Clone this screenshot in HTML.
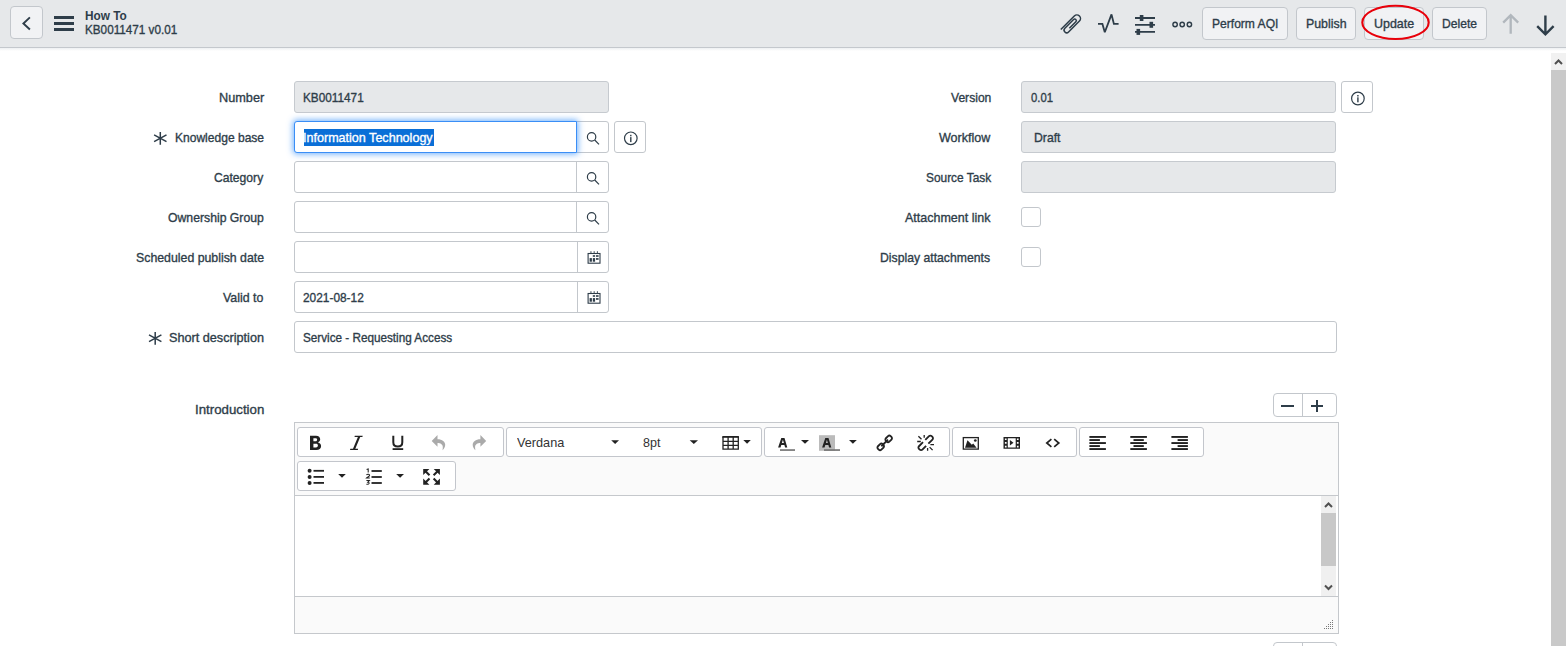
<!DOCTYPE html>
<html><head><meta charset="utf-8">
<style>
*{box-sizing:border-box;margin:0;padding:0}
html,body{width:1566px;height:646px;overflow:hidden;background:#fff;font-family:"Liberation Sans",sans-serif;color:#2e3d49}
.a{position:absolute}
.t{position:absolute;white-space:nowrap;line-height:20px;-webkit-text-stroke:0.35px currentColor}
#hdr{left:0;top:0;width:1566px;height:48px;background:#e6e8ea;border-bottom:1px solid #c4c8cd}
#shadow{left:0;top:48px;width:1566px;height:3px;background:linear-gradient(#eef0f2,#fff)}
.btn{position:absolute;background:#f1f2f4;border:1px solid #c3c7cc;border-radius:4px}
.lbl{position:absolute;white-space:nowrap;line-height:14px;text-align:right;color:#2e3d49}
.inp{position:absolute;border:1px solid #c3c7cc;border-radius:3px;background:#fff}
.ro{background:#e6e8ea;border-color:#c6cacf}
.ib{position:absolute;border:1px solid #c3c7cc;border-radius:3px;background:#fff}
.req{position:absolute}
.tg{border:1px solid #c3c6cc;border-radius:3px;background:#fff}
</style></head>
<body>
<div id="hdr" class="a"></div>
<div id="shadow" class="a"></div>

<!-- back button -->
<div class="btn" style="left:10px;top:6px;width:33px;height:33px"></div>
<svg class="a" style="left:10px;top:6px" width="33" height="33" viewBox="0 0 33 33"><path d="M29.5 0" /><path d="M19.9 11.4 L13.4 17.45 L19.9 23.5" fill="none" stroke="#2e3d49" stroke-width="1.9"/></svg>
<!-- hamburger -->
<div class="a" style="left:54px;top:16px;width:20px;height:3px;background:#2e3d49"></div>
<div class="a" style="left:54px;top:22px;width:20px;height:3px;background:#2e3d49"></div>
<div class="a" style="left:54px;top:28px;width:20px;height:3px;background:#2e3d49"></div>
<div class="t" style="left:84.82px;top:6.00px;font-size:13.5px;font-weight:700;transform:scaleX(0.8761);transform-origin:0 0;color:#2e3d49;-webkit-text-stroke:0">How To</div>
<div class="t" style="left:84.80px;top:20.00px;font-size:13px;font-weight:400;transform:scaleX(0.9010);transform-origin:0 0;color:#2e3d49;">KB0011471 v0.01</div>

<!-- header icons -->
<svg class="a" style="left:0;top:0" width="1200" height="50" viewBox="0 0 1200 50"><g transform="translate(1071.6 23.8) rotate(-45) scale(1.13)"><path d="M-10.3 -3.2 H6.6 A3.2 3.2 0 0 1 6.6 3.2 H-7 A2.3 2.3 0 0 1 -7 -1.4 H3.9 A1.4 1.4 0 0 1 3.9 1.4 H-4.2" fill="none" stroke="#2e3d49" stroke-width="1.35"/></g></svg>
<svg class="a" style="left:0;top:0" width="1200" height="50" viewBox="0 0 1200 50"><path d="M1098 23.9 H1102.4 L1104.8 32.2 L1111.5 14.4 L1113.9 23.9 H1118.6" fill="none" stroke="#2e3d49" stroke-width="1.8" stroke-linejoin="miter" stroke-miterlimit="2.2"/></svg>
<svg class="a" style="left:1133px;top:12px" width="24" height="24" viewBox="0 0 24 24"><path d="M2 6 H22 M2 12.8 H22 M2 19.9 H22" stroke="#2e3d49" stroke-width="1.8"/><rect x="6.8" y="3" width="3.6" height="6" fill="#2e3d49"/><rect x="16.5" y="9.8" width="3.6" height="6" fill="#2e3d49"/><rect x="3.5" y="16.9" width="3.6" height="6" fill="#2e3d49"/></svg>
<svg class="a" style="left:0;top:0" width="1200" height="50" viewBox="0 0 1200 50"><g fill="none" stroke="#2e3d49" stroke-width="1.4"><circle cx="1175.1" cy="24.5" r="2.2"/><circle cx="1182.2" cy="24.5" r="2.2"/><circle cx="1189.4" cy="24.5" r="2.2"/></g></svg>

<div class="btn" style="left:1202px;top:7px;width:86px;height:33px"></div>
<div class="t" style="left:1211.77px;top:14.00px;font-size:13px;font-weight:400;transform:scaleX(0.9286);transform-origin:0 0;color:#2e3d49;">Perform AQI</div>
<div class="btn" style="left:1296px;top:7px;width:60px;height:33px"></div>
<div class="t" style="left:1305.75px;top:14.00px;font-size:13px;font-weight:400;transform:scaleX(0.9512);transform-origin:0 0;color:#2e3d49;">Publish</div>
<div class="btn" style="left:1364px;top:7px;width:60px;height:33px"></div>
<div class="t" style="left:1373.74px;top:14.00px;font-size:13px;font-weight:400;transform:scaleX(0.9585);transform-origin:0 0;color:#2e3d49;">Update</div>
<div class="btn" style="left:1432px;top:7px;width:55px;height:33px"></div>
<div class="t" style="left:1442.27px;top:14.00px;font-size:13px;font-weight:400;transform:scaleX(0.9306);transform-origin:0 0;color:#2e3d49;">Delete</div>
<svg class="a" style="left:1361px;top:4px" width="70" height="37" viewBox="0 0 70 37"><ellipse cx="34.5" cy="18.4" rx="33.2" ry="16.6" fill="none" stroke="#e8000a" stroke-width="2.1"/></svg>
<svg class="a" style="left:1498px;top:11px" width="26" height="26" viewBox="0 0 26 26"><path d="M12.7 22.7 V4.5 M5.2 11.6 L12.7 4.2 L20.2 11.6" fill="none" stroke="#b1b7bd" stroke-width="2.3"/></svg>
<svg class="a" style="left:1532px;top:12px" width="26" height="26" viewBox="0 0 26 26"><path d="M13.4 3.5 V21.5 M5.2 14.2 L13.4 22.3 L21.6 14.2" fill="none" stroke="#2e3d49" stroke-width="2.4"/></svg>

<!-- page scrollbar -->
<div class="a" style="left:1551px;top:53px;width:15px;height:593px;background:#f1f1f1"></div>
<div class="a" style="left:1551px;top:70px;width:15px;height:576px;background:#c9c9c9"></div>
<svg class="a" style="left:1551px;top:53px" width="15" height="17" viewBox="0 0 15 17"><path d="M4 11 L7.5 7.5 L11 11" fill="none" stroke="#505050" stroke-width="2"/></svg>

<!-- FORM LEFT -->
<div class="t" style="left:218.72px;top:88.00px;font-size:13px;font-weight:400;transform:scaleX(0.9778);transform-origin:0 0;color:#2e3d49;">Number</div>
<div class="inp ro" style="left:294px;top:81px;width:315px;height:32px"></div>
<div class="t" style="left:302.99px;top:88.00px;font-size:13px;font-weight:400;transform:scaleX(0.9061);transform-origin:0 0;color:#2e3d49;">KB0011471</div>

<div class="t" style="left:174.77px;top:128.00px;font-size:13px;font-weight:400;transform:scaleX(0.9263);transform-origin:0 0;color:#2e3d49;">Knowledge base</div>
<div class="inp" style="left:576px;top:121px;width:33px;height:32px;border-radius:0 3px 3px 0"></div>
<div class="inp" style="left:294px;top:121px;width:283px;height:32px;border-radius:3px 0 0 3px;border-color:#3a8ef6;box-shadow:0 0 6px 1px rgba(45,140,250,.7)"></div>
<div class="a" style="left:304px;top:129px;width:130px;height:17px;background:#0a6fd7"></div>
<div class="t" style="left:303.23px;top:128.00px;font-size:13px;font-weight:400;transform:scaleX(0.9662);transform-origin:0 0;color:#fff;">Information Technology</div>
<div class="ib" style="left:614px;top:121px;width:32px;height:32px"></div>

<div class="t" style="left:214.27px;top:168.00px;font-size:13px;font-weight:400;transform:scaleX(0.9327);transform-origin:0 0;color:#2e3d49;">Category</div>
<div class="inp" style="left:294px;top:161px;width:315px;height:32px"></div>
<div class="a" style="left:576px;top:162px;width:1px;height:30px;background:#c3c7cc"></div>

<div class="t" style="left:167.76px;top:208.00px;font-size:13px;font-weight:400;transform:scaleX(0.9406);transform-origin:0 0;color:#2e3d49;">Ownership Group</div>
<div class="inp" style="left:294px;top:201px;width:315px;height:32px"></div>
<div class="a" style="left:576px;top:202px;width:1px;height:30px;background:#c3c7cc"></div>

<div class="t" style="left:135.75px;top:248.00px;font-size:13px;font-weight:400;transform:scaleX(0.9478);transform-origin:0 0;color:#2e3d49;">Scheduled publish date</div>
<div class="inp" style="left:294px;top:241px;width:315px;height:32px"></div>
<div class="a" style="left:577px;top:242px;width:1px;height:30px;background:#c3c7cc"></div>

<div class="t" style="left:223.20px;top:288.00px;font-size:13px;font-weight:400;transform:scaleX(0.9524);transform-origin:0 0;color:#2e3d49;">Valid to</div>
<div class="inp" style="left:294px;top:281px;width:315px;height:32px"></div>
<div class="a" style="left:577px;top:282px;width:1px;height:30px;background:#c3c7cc"></div>
<div class="t" style="left:302.79px;top:288.00px;font-size:13px;font-weight:400;transform:scaleX(0.9138);transform-origin:0 0;color:#2e3d49;">2021-08-12</div>

<div class="t" style="left:168.73px;top:328.00px;font-size:13px;font-weight:400;transform:scaleX(0.9740);transform-origin:0 0;color:#2e3d49;">Short description</div>
<div class="inp" style="left:294px;top:321px;width:1043px;height:32px"></div>
<div class="t" style="left:302.80px;top:328.00px;font-size:13px;font-weight:400;transform:scaleX(0.9012);transform-origin:0 0;color:#2e3d49;">Service - Requesting Access</div>

<!-- FORM RIGHT -->
<div class="t" style="left:950.70px;top:88.00px;font-size:13px;font-weight:400;transform:scaleX(0.9302);transform-origin:0 0;color:#2e3d49;">Version</div>
<div class="inp ro" style="left:1021px;top:81px;width:315px;height:32px"></div>
<div class="t" style="left:1030.70px;top:88.00px;font-size:13px;font-weight:400;transform:scaleX(0.8680);transform-origin:0 0;color:#2e3d49;">0.01</div>
<div class="ib" style="left:1341px;top:81px;width:32px;height:32px"></div>

<div class="t" style="left:939.20px;top:128.00px;font-size:13px;font-weight:400;transform:scaleX(0.9623);transform-origin:0 0;color:#2e3d49;">Workflow</div>
<div class="inp ro" style="left:1021px;top:121px;width:315px;height:32px"></div>
<div class="t" style="left:1034.36px;top:128.00px;font-size:13px;font-weight:400;transform:scaleX(0.9407);transform-origin:0 0;color:#2e3d49;">Draft</div>

<div class="t" style="left:925.79px;top:168.00px;font-size:13px;font-weight:400;transform:scaleX(0.9143);transform-origin:0 0;color:#2e3d49;">Source Task</div>
<div class="inp ro" style="left:1021px;top:161px;width:315px;height:32px"></div>

<div class="t" style="left:904.70px;top:208.00px;font-size:13px;font-weight:400;transform:scaleX(0.9607);transform-origin:0 0;color:#2e3d49;">Attachment link</div>
<div class="inp" style="left:1021px;top:207px;width:20px;height:20px;border-radius:3px"></div>
<div class="t" style="left:880.26px;top:248.00px;font-size:13px;font-weight:400;transform:scaleX(0.9397);transform-origin:0 0;color:#2e3d49;">Display attachments</div>
<div class="inp" style="left:1021px;top:247px;width:20px;height:20px;border-radius:3px"></div>

<!-- INTRO -->
<div class="t" style="left:194.68px;top:400.00px;font-size:13px;font-weight:400;transform:scaleX(1.0197);transform-origin:0 0;color:#2e3d49;">Introduction</div>


<!-- -/+ -->
<div class="inp" style="left:1273px;top:393px;width:64px;height:24px;border-radius:4px"></div>
<div class="a" style="left:1302px;top:394px;width:1px;height:22px;background:#c3c7cc"></div>
<div class="a" style="left:1281px;top:405px;width:13px;height:2px;background:#2e3d49"></div>
<div class="a" style="left:1310.5px;top:405px;width:12px;height:2px;background:#2e3d49"></div>
<div class="a" style="left:1315.5px;top:400px;width:2px;height:12px;background:#2e3d49"></div>

<!-- EDITOR -->
<div class="a" style="left:294px;top:422px;width:1045px;height:212px;border:1px solid #c5c8cc;background:#fafafa"></div>
<div class="a" style="left:295px;top:495px;width:1043px;height:1px;background:#c5c8cc"></div>
<div class="a" style="left:295px;top:496px;width:1043px;height:100px;background:#fff"></div>
<div class="a" style="left:295px;top:596px;width:1043px;height:1px;background:#c5c8cc"></div>
<div class="a" style="left:1321px;top:496px;width:15px;height:100px;background:#f0f0f0"></div>
<div class="a" style="left:1321px;top:513px;width:15px;height:53px;background:#c8c8c8"></div>
<svg class="a" style="left:1321px;top:496px" width="15" height="100" viewBox="0 0 15 100"><path d="M4 11 L7.5 7.5 L11 11" fill="none" stroke="#505050" stroke-width="2"/><path d="M4 89.5 L7.5 93 L11 89.5" fill="none" stroke="#505050" stroke-width="2"/></svg>
<svg class="a" style="left:0;top:0" width="1566" height="646" viewBox="0 0 1566 646" shape-rendering="crispEdges"><g fill="#7a7a7a"><rect x="1332" y="620" width="1" height="1"/><rect x="1332" y="622" width="1" height="1"/><rect x="1330" y="622" width="1" height="1"/><rect x="1332" y="624" width="1" height="1"/><rect x="1330" y="624" width="1" height="1"/><rect x="1328" y="624" width="1" height="1"/><rect x="1332" y="626" width="1" height="1"/><rect x="1330" y="626" width="1" height="1"/><rect x="1328" y="626" width="1" height="1"/><rect x="1326" y="626" width="1" height="1"/><rect x="1332" y="628" width="1" height="1"/><rect x="1330" y="628" width="1" height="1"/><rect x="1328" y="628" width="1" height="1"/><rect x="1326" y="628" width="1" height="1"/><rect x="1324" y="628" width="1" height="1"/></g></svg>

<!-- toolbar groups -->
<div class="a tg" style="left:297px;top:427px;width:207px;height:30px"></div>
<div class="a tg" style="left:506px;top:427px;width:256px;height:30px"></div>
<div class="a tg" style="left:764px;top:427px;width:186px;height:30px"></div>
<div class="a tg" style="left:952px;top:427px;width:125px;height:30px"></div>
<div class="a tg" style="left:1079px;top:427px;width:125px;height:30px"></div>
<div class="a tg" style="left:297px;top:461px;width:159px;height:30px"></div>

<!-- bottom partial -->
<div class="inp" style="left:1273px;top:642px;width:64px;height:24px;border-radius:4px"></div>
<div class="a" style="left:1302px;top:643px;width:1px;height:22px;background:#c3c7cc"></div>


<div class="t" style="left:516.70px;top:433.00px;font-size:13.5px;font-weight:400;transform:scaleX(0.9400);transform-origin:0 0;color:#333;-webkit-text-stroke:0">Verdana</div>
<div class="t" style="left:643.27px;top:433.00px;font-size:13.5px;font-weight:400;transform:scaleX(0.9278);transform-origin:0 0;color:#333;-webkit-text-stroke:0">8pt</div>
<!-- ICON OVERLAY -->
<svg class="a" style="left:0;top:0" width="1566" height="646" viewBox="0 0 1566 646">
<!-- asterisks -->
<g stroke="#2e3d49" stroke-width="1.5" fill="none">
<path d="M160.3 131.9 V144.8 M154.1 134.9 L166.5 141.7 M154.1 141.7 L166.5 134.9"/>
<path d="M155.2 331.9 V344.8 M149 334.9 L161.4 341.7 M149 341.7 L161.4 334.9"/>
</g>
<!-- search icons -->
<g stroke="#2e3d49" stroke-width="1.2" fill="none">
<circle cx="591.6" cy="136.9" r="4.2"/><path d="M594.7 140.0 L599 144.3"/>
<circle cx="591.6" cy="176.9" r="4.2"/><path d="M594.7 180.0 L599 184.3"/>
<circle cx="591.6" cy="216.9" r="4.2"/><path d="M594.7 220.0 L599 224.3"/>
</g>
<!-- calendar icons -->
<g>
<rect x="588.1" y="253.5" width="11.9" height="9.7" fill="none" stroke="#2e3d49" stroke-width="1.1"/>
<g fill="#2e3d49">
<rect x="590.5" y="251.2" width="0.9" height="2.2"/><rect x="593.7" y="251.2" width="0.9" height="2.2"/><rect x="596.9" y="251.2" width="0.9" height="2.2"/>
<rect x="592.8" y="255.2" width="2.3" height="1.6"/><rect x="596" y="255.2" width="2.6" height="1.6"/>
<rect x="589.6" y="258.1" width="2.3" height="3.6"/><rect x="592.8" y="258.1" width="2.3" height="3.6"/><rect x="596" y="258.1" width="2.6" height="1.7"/>
</g></g>
<g transform="translate(0 40)">
<rect x="588.1" y="253.5" width="11.9" height="9.7" fill="none" stroke="#2e3d49" stroke-width="1.1"/>
<g fill="#2e3d49">
<rect x="590.5" y="251.2" width="0.9" height="2.2"/><rect x="593.7" y="251.2" width="0.9" height="2.2"/><rect x="596.9" y="251.2" width="0.9" height="2.2"/>
<rect x="592.8" y="255.2" width="2.3" height="1.6"/><rect x="596" y="255.2" width="2.6" height="1.6"/>
<rect x="589.6" y="258.1" width="2.3" height="3.6"/><rect x="592.8" y="258.1" width="2.3" height="3.6"/><rect x="596" y="258.1" width="2.6" height="1.7"/>
</g></g>
<!-- info icons -->
<g stroke="#2e3d49" stroke-width="1.2" fill="none">
<circle cx="630.8" cy="138.3" r="6.3"/>
<circle cx="1357.9" cy="98.5" r="6.3"/>
</g>
<g fill="#2e3d49">
<rect x="630.1" y="134.8" width="1.4" height="1.5"/><rect x="630.1" y="137.1" width="1.4" height="5"/>
<rect x="1357.2" y="95" width="1.4" height="1.5"/><rect x="1357.2" y="97.3" width="1.4" height="5"/>
</g>

<!-- TOOLBAR ICONS -->
<g fill="#222">
<!-- bold -->
<path fill-rule="evenodd" d="M310 435.7 H316 C318.8 435.7 320.2 437.2 320.2 439.3 C320.2 440.8 319.2 441.9 318 442.4 C319.8 442.8 321.1 444.1 321.1 446.1 C321.1 448.6 319.3 450 316.3 450 H310 Z M313.4 438.3 V441.3 H315.6 C316.6 441.3 317.1 440.7 317.1 439.8 C317.1 438.8 316.6 438.3 315.6 438.3 Z M313.4 443.8 V447.4 H316 C317.3 447.4 317.9 446.8 317.9 445.6 C317.9 444.4 317.3 443.8 316 443.8 Z"/>
<!-- italic -->
<path d="M354.8 435.7 H362.7 L362.4 437 H360.2 L355.3 448.7 H358.1 L357.8 450 H350 L350.3 448.7 H353 L357.9 437 H354.5 Z"/>
<!-- underline -->
<path d="M393.3 435.7 V442.3 C393.3 445.1 395 446.6 397.8 446.6 C400.6 446.6 402.3 445.1 402.3 442.3 V435.7" fill="none" stroke="#222" stroke-width="2"/>
<rect x="392.6" y="448.2" width="10.6" height="1.8"/>
<!-- table -->
<rect x="722.3" y="436" width="16.6" height="1.8"/>
<path d="M723 437 V449.2 H738.3 V437 M723 441.3 H738.3 M723 445.3 H738.3 M728.1 437 V449.2 M733.2 437 V449.2" fill="none" stroke="#222" stroke-width="1.3"/>
<!-- carets -->
<path d="M611.2 440.2 H619 L615.1 444 Z"/>
<path d="M689.7 440.2 H698 L693.85 444 Z"/>
<path d="M743.3 440 H750.8 L747.05 443.7 Z"/>
<path d="M801 440 H809 L805 443.8 Z"/>
<path d="M849 440 H856.8 L852.9 443.8 Z"/>
<path d="M338.2 474 H345.8 L342 477.7 Z"/>
<path d="M396.2 474 H404 L400.1 477.7 Z"/>
<!-- text color -->
<path d="M781.3 438 H784.5 L787.3 447.5 H785.1 L784.4 445 H781.3 L780.5 447.5 H778.1 Z M781.9 443.1 H783.9 L782.9 439.7 Z" fill-rule="evenodd"/>
<rect x="780" y="449.2" width="15" height="1.7" fill="#777"/>
<rect x="819" y="435.2" width="16" height="15.6" fill="#bbb"/>
<path d="M825.3 438 H828.5 L831.3 447.5 H829.1 L828.4 445 H825.3 L824.5 447.5 H822.1 Z M825.9 443.1 H827.9 L826.9 439.7 Z" fill-rule="evenodd"/>
<rect x="824" y="449.2" width="16" height="1.7" fill="#777"/>
<!-- image -->
<rect x="963.3" y="437.6" width="15" height="11.5" fill="none" stroke="#222" stroke-width="1.3"/>
<path d="M965 447.8 L967.5 440.2 L971.8 444.8 L973.2 443.6 L976.6 447.8 Z"/>
<circle cx="975.3" cy="440.5" r="1.35"/>
<!-- media -->
<path fill-rule="evenodd" d="M1003.5 437 H1020 V448.8 H1003.5 Z M1007.8 438.2 V447.6 H1015.7 V438.2 Z M1004.9 438.4 V440.1 H1006.6 V438.4 Z M1004.9 442.1 V443.8 H1006.6 V442.1 Z M1004.9 445.8 V447.5 H1006.6 V445.8 Z M1016.9 438.4 V440.1 H1018.6 V438.4 Z M1016.9 442.1 V443.8 H1018.6 V442.1 Z M1016.9 445.8 V447.5 H1018.6 V445.8 Z"/>
<path d="M1009.9 440 L1013.5 442.8 L1009.9 445.6 Z"/>
<!-- code -->
<path d="M1051.4 439.2 L1046.8 443 L1051.4 446.8 M1054.2 439.2 L1058.8 443 L1054.2 446.8" fill="none" stroke="#222" stroke-width="1.7"/>
<!-- align -->
<rect x="1089.4" y="436" width="16.5" height="1.9"/><rect x="1089.4" y="439.1" width="10.5" height="1.9"/><rect x="1089.4" y="442.1" width="16.5" height="1.9"/><rect x="1089.4" y="445.1" width="10.5" height="1.9"/><rect x="1089.4" y="448.1" width="16.5" height="1.9"/>
<rect x="1130.3" y="436" width="16.6" height="1.9"/><rect x="1133.5" y="439.1" width="10.3" height="1.9"/><rect x="1130.3" y="442.1" width="16.6" height="1.9"/><rect x="1133.5" y="445.1" width="10.3" height="1.9"/><rect x="1130.3" y="448.1" width="16.6" height="1.9"/>
<rect x="1171.4" y="436" width="16.5" height="1.9"/><rect x="1177.6" y="439.1" width="10.3" height="1.9"/><rect x="1171.4" y="442.1" width="16.5" height="1.9"/><rect x="1177.6" y="445.1" width="10.3" height="1.9"/><rect x="1171.4" y="448.1" width="16.5" height="1.9"/>
<!-- bullets -->
<circle cx="309.6" cy="470.8" r="2"/><circle cx="309.6" cy="476.9" r="2"/><circle cx="309.6" cy="482.9" r="2"/>
<rect x="313.5" y="469.9" width="10.5" height="1.8"/><rect x="313.5" y="476" width="10.5" height="1.8"/><rect x="313.5" y="482" width="10.5" height="1.8"/>
<!-- numbered -->
<rect x="371.5" y="470.1" width="10.3" height="1.8"/><rect x="371.5" y="476.1" width="10.3" height="1.8"/><rect x="371.5" y="482.1" width="10.3" height="1.8"/>
<path d="M366.6 469.5 L368.2 468.9 V472.6 M366.4 474.8 C367.5 474 369.6 474.2 369.6 475.3 C369.6 476.5 367 477.3 366.4 478 H369.8 M366.4 480.4 H369.4 L367.8 482.2 C369.8 482.2 369.8 484.6 366.4 484.2" fill="none" stroke="#222" stroke-width="1.05"/>
<!-- fullscreen -->
<path d="M423.2 468.9 H429.4 L423.2 475.1 Z M439.9 468.9 H433.7 L439.9 475.1 Z M423.2 484.7 H429.4 L423.2 478.5 Z M439.9 484.7 H433.7 L439.9 478.5 Z"/>
<path d="M425.5 471.2 L429.5 475.2 M437.6 471.2 L433.6 475.2 M425.5 482.4 L429.5 478.4 M437.6 482.4 L433.6 478.4" stroke="#222" stroke-width="2.1" fill="none"/>
</g>
<!-- undo / redo -->
<g fill="#aaa">
<path d="M437.5 434.9 L431.7 441 L437.5 446.8 V443 C440.5 443 442.8 444.5 442.8 447 C442.8 448.2 442.7 449.3 442.5 450.3 C444.3 448.6 445.2 446.8 445.2 444.8 C445.2 441.7 442.3 439.2 437.5 439.2 Z"/>
<path transform="translate(917.9 0) scale(-1 1)" d="M437.5 434.9 L431.7 441 L437.5 446.8 V443 C440.5 443 442.8 444.5 442.8 447 C442.8 448.2 442.7 449.3 442.5 450.3 C444.3 448.6 445.2 446.8 445.2 444.8 C445.2 441.7 442.3 439.2 437.5 439.2 Z"/>
</g>
<!-- link / unlink -->
<g fill="none" stroke="#222" stroke-width="1.6">
<g transform="translate(884.7 442.9) rotate(-45) scale(1.15)">
<rect x="2" y="-2.1" width="5.8" height="4.2" rx="1.6"/>
<rect x="-7.8" y="-2.1" width="5.8" height="4.2" rx="1.6"/>
<path d="M-4.1 0 H4.1"/>
</g>
<g transform="translate(925.7 442.9) rotate(-45) scale(1.15)">
<path d="M1.6 -2.1 H6.2 A1.6 1.6 0 0 1 7.8 -0.5 V0.5 A1.6 1.6 0 0 1 6.2 2.1 H1.2"/>
<path d="M-1.6 2.1 H-6.2 A1.6 1.6 0 0 1 -7.8 0.5 V-0.5 A1.6 1.6 0 0 1 -6.2 -2.1 H-1.2"/>
</g>
<path d="M918.4 436.2 L921.5 439.2 M924.2 435 V437.8 M917.2 441.5 H920.8 M927.6 450.8 V448 M930.4 444.6 H934 M929.6 447.1 L932.6 450.1" stroke-width="1.3"/>
</g>
</svg>
</body></html>
